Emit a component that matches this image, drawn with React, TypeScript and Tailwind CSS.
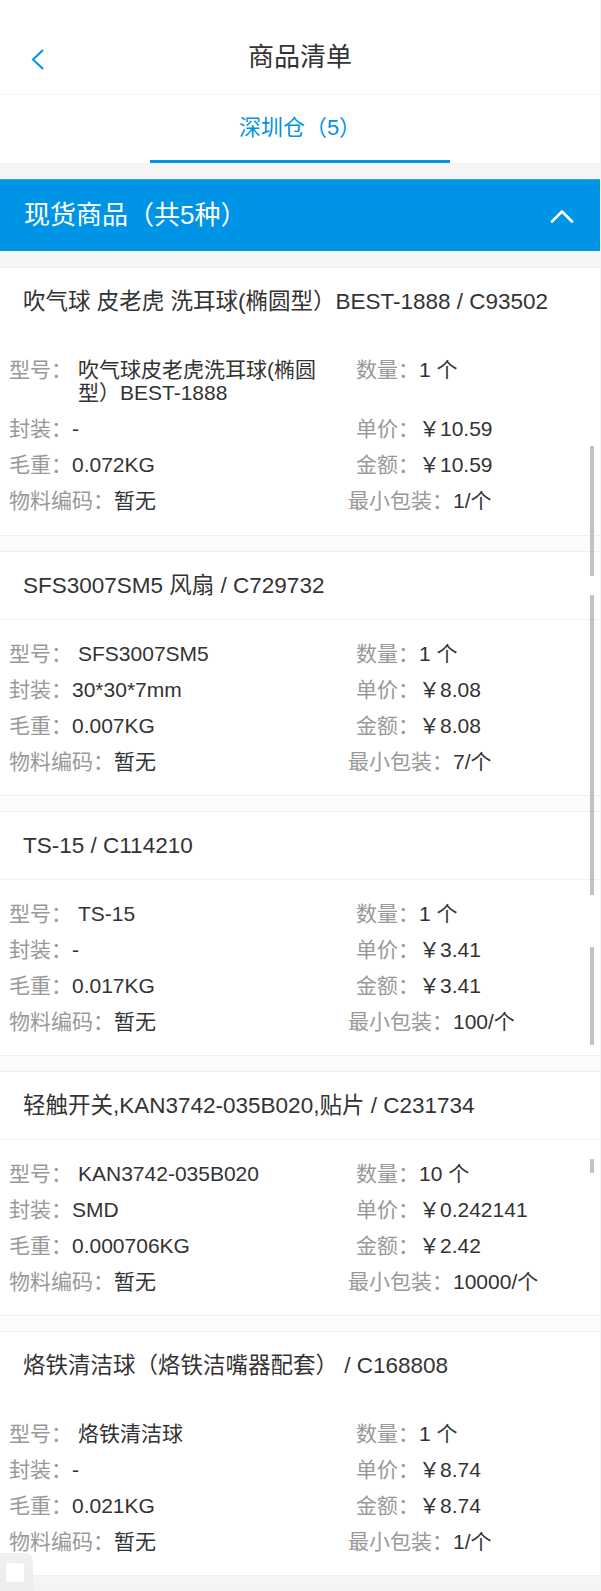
import React from "react";

type Item = {
  title: string;
  model: string;
  pkg: string;
  weight: string;
  code: string;
  qty: string;
  price: string;
  amount: string;
  minPack: string;
  faintSep?: boolean;
};

const items: Item[] = [
  {
    title: "吹气球 皮老虎 洗耳球(椭圆型）BEST-1888 / C93502",
    model: "吹气球皮老虎洗耳球(椭圆型）BEST-1888",
    pkg: "-",
    weight: "0.072KG",
    code: "暂无",
    qty: "1 个",
    price: "￥10.59",
    amount: "￥10.59",
    minPack: "1/个",
    faintSep: true,
  },
  {
    title: "SFS3007SM5 风扇 / C729732",
    model: "SFS3007SM5",
    pkg: "30*30*7mm",
    weight: "0.007KG",
    code: "暂无",
    qty: "1 个",
    price: "￥8.08",
    amount: "￥8.08",
    minPack: "7/个",
  },
  {
    title: "TS-15 / C114210",
    model: "TS-15",
    pkg: "-",
    weight: "0.017KG",
    code: "暂无",
    qty: "1 个",
    price: "￥3.41",
    amount: "￥3.41",
    minPack: "100/个",
  },
  {
    title: "轻触开关,KAN3742-035B020,贴片 / C231734",
    model: "KAN3742-035B020",
    pkg: "SMD",
    weight: "0.000706KG",
    code: "暂无",
    qty: "10 个",
    price: "￥0.242141",
    amount: "￥2.42",
    minPack: "10000/个",
  },
  {
    title: "烙铁清洁球（烙铁洁嘴器配套） / C168808",
    model: "烙铁清洁球",
    pkg: "-",
    weight: "0.021KG",
    code: "暂无",
    qty: "1 个",
    price: "￥8.74",
    amount: "￥8.74",
    minPack: "1/个",
    faintSep: true,
  },
];

function Field({ label, value, indent }: { label: string; value: string; indent?: boolean }) {
  return (
    <div className={`flex items-start ${indent ? "pl-[8px]" : ""}`}>
      <span className="shrink-0 text-[#999]">{label}</span>
      <span className="text-[#333]">{value}</span>
    </div>
  );
}

function ItemCard({ item, first }: { item: Item; first?: boolean }) {
  return (
    <div className="border-y border-[#efefef] bg-white">
      <div
        className={`flex h-[68px] items-center border-b pl-[23px] text-[22.5px] text-[#333] ${
          item.faintSep ? "border-white" : "border-[#f2f2f2]"
        }`}
      >
        {item.title}
      </div>
      <div
        className={`grid grid-cols-[320px_1fr] gap-x-[19px] gap-y-[13px] pt-[22px] pl-[9px] text-[21px] leading-[23px] ${
          first ? "pb-[23px]" : "pb-[22px]"
        }`}
      >
        <div className="flex items-start">
          <span className="shrink-0 text-[#999]">型号：</span>
          <span className="ml-[6px] text-[#333]">{item.model}</span>
        </div>
        <Field label="数量：" value={item.qty} indent />
        <Field label="封装：" value={item.pkg} />
        <Field label="单价：" value={item.price} indent />
        <Field label="毛重：" value={item.weight} />
        <Field label="金额：" value={item.amount} indent />
        <Field label="物料编码：" value={item.code} />
        <Field label="最小包装：" value={item.minPack} />
      </div>
    </div>
  );
}

export default function App() {
  return (
    <div className="relative min-h-screen bg-[#f3f3f3] font-['Liberation_Sans','Noto_Sans_CJK_SC',sans-serif] [text-spacing-trim:space-all]">
      <div className="w-[600px] bg-[#f5f5f5]">
        {/* top bar */}
        <header className="relative flex h-[95px] items-center justify-center border-b border-[#f5f5f5] bg-white pt-[20px]">
          <button type="button" className="absolute left-[31px] top-[49px]">
            <svg width="13" height="21" viewBox="0 0 13 21" fill="none">
              <polyline
                points="11.5,1.5 2,10.5 11.5,19.5"
                stroke="#0094e6"
                strokeWidth="2"
                strokeLinecap="round"
                strokeLinejoin="round"
              />
            </svg>
          </button>
          <h1 className="text-[26px] font-normal text-[#333]">商品清单</h1>
        </header>

        {/* warehouse tab */}
        <div className="flex h-[68px] justify-center bg-white">
          <div className="flex w-[300px] items-center justify-center border-b-[3px] border-[#0094e6] text-[22px] text-[#0094e6]">
            深圳仓（5）
          </div>
        </div>

        <div className="pt-[16px]">
          <div className="flex h-[72px] items-center justify-between border-t border-[#33a6ea] bg-[#0094e6] pl-[24px] pr-[26px] text-[26px] text-white">
            <span>现货商品（共5种）</span>
            <svg width="24" height="14" viewBox="0 0 24 14" fill="none">
              <polyline
                points="2,12.5 12,2.5 22,12.5"
                stroke="#fff"
                strokeWidth="2.6"
                strokeLinecap="round"
                strokeLinejoin="round"
              />
            </svg>
          </div>
        </div>

        <div className="pt-[16px] pb-[10px]">
          <div className="flex flex-col gap-[15px] bg-[#fcfcfc]">
            {items.map((item, i) => (
              <ItemCard key={item.title} item={item} first={i === 0} />
            ))}
          </div>
        </div>
      </div>

      {/* stitched scrollbar remnants */}
      <div className="absolute left-[590px] top-[446px] h-[130px] w-[4px] bg-[#c1c1c1]" />
      <div className="absolute left-[590px] top-[595px] h-[300px] w-[4px] bg-[#c1c1c1]" />
      <div className="absolute left-[590px] top-[947px] h-[98px] w-[4px] bg-[#c1c1c1]" />
      <div className="absolute left-[590px] top-[1159px] h-[14px] w-[4px] bg-[#c1c1c1]" />

      {/* floating corner button */}
      <div className="absolute left-0 top-[1553px] flex h-[38px] w-[33px] items-start rounded-tr-[8px] bg-[#ededed]/90 pl-[6px] pt-[10px]">
        <div className="h-[19px] w-[18px] rounded-[2px] bg-white" />
      </div>
    </div>
  );
}
